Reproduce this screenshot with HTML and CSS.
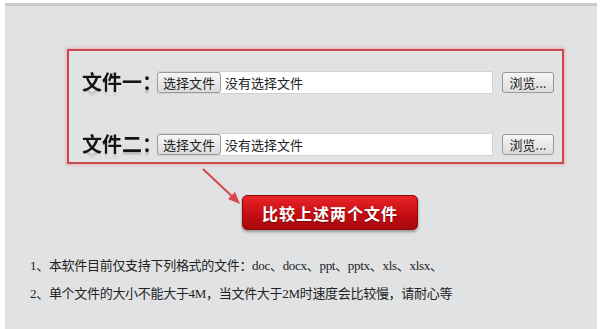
FILE: index.html
```html
<!DOCTYPE html>
<html lang="zh-CN">
<head>
    <meta charset="UTF-8">
    <title>文件比较</title>
    <link rel="stylesheet" href="styles.css">
</head>
<body>
    <div class="panel">
        <div class="upload-box">
            <div class="file-row">
                <span class="file-label">文件一：</span>
                <div class="file-field">
                    <span class="choose-btn">选择文件</span>
                    <span class="file-name">没有选择文件</span>
                </div>
                <span class="browse-btn">浏览...</span>
            </div>
            <div class="file-row">
                <span class="file-label">文件二：</span>
                <div class="file-field">
                    <span class="choose-btn">选择文件</span>
                    <span class="file-name">没有选择文件</span>
                </div>
                <span class="browse-btn">浏览...</span>
            </div>
        </div>

        <div class="action">
            <svg class="arrow" width="42" height="40" viewBox="0 0 42 40">
                <line x1="3" y1="3" x2="36" y2="34" stroke="#d8464a" stroke-width="2"/>
                <polygon points="40,38 28,33 35,26" fill="#d8464a"/>
            </svg>
            <button class="compare-btn">比较上述两个文件</button>
        </div>

        <div class="notes">
            <p>1、本软件目前仅支持下列格式的文件：doc、docx、ppt、pptx、xls、xlsx、</p>
            <p>2、单个文件的大小不能大于4M，当文件大于2M时速度会比较慢，请耐心等</p>
        </div>
    </div>
</body>
</html>
```

FILE: styles.css
```css
body {
    margin: 0;
    background-color: #ffffff;
    font-family: "Noto Sans CJK SC", sans-serif;
}

.panel {
    margin: 3px 3px 0 5px;
    height: 326px;
    background-color: #e1e2e4;
    border-top: 3px solid #c9cacc;
    box-sizing: border-box;
    padding-top: 43px;
    overflow: hidden;
}

.upload-box {
    margin-left: 62px;
    width: 497px;
    border: 2px solid #c9484c;
    box-shadow: 0 0 3px 1px rgba(232, 140, 140, 0.6);
    padding: 19px 8px 6px 13px;
    box-sizing: border-box;
}

.file-row {
    display: flex;
    align-items: center;
    height: 24px;
}

.file-row + .file-row {
    margin-top: 38px;
}

.file-label {
    width: 75px;
    flex-shrink: 0;
    white-space: nowrap;
    font-size: 20px;
    font-weight: bold;
    color: #151515;
    line-height: 24px;
    -webkit-box-reflect: below -8px linear-gradient(transparent 55%, rgba(255, 255, 255, 0.35));
}

.file-field {
    width: 336px;
    height: 23px;
    flex-shrink: 0;
    display: flex;
    align-items: center;
    background-color: #ffffff;
    border: 1px solid #d3d3d3;
    box-sizing: border-box;
}

.choose-btn,
.browse-btn {
    font-size: 13px;
    color: #222;
    line-height: 19px;
    padding: 0 5px;
    border: 1px solid #9a9a9a;
    border-radius: 3px;
    background: linear-gradient(#f6f6f6, #dcdcdc);
    white-space: nowrap;
}

.choose-btn {
    margin-left: -1px;
}

.file-name {
    margin-left: 4px;
    font-size: 13px;
    color: #222;
    white-space: nowrap;
}

.browse-btn {
    margin-left: 9px;
    width: 40px;
    text-align: center;
}

.action {
    display: flex;
    align-items: flex-start;
    margin-top: 2px;
    padding-left: 195px;
    height: 64px;
}

.compare-btn {
    margin-top: 29px;
    width: 176px;
    height: 35px;
    border: 1px solid #8c0a0c;
    border-radius: 5px;
    background: linear-gradient(#e8262a, #c50d12 55%, #a9080c);
    box-shadow: 0 2px 3px rgba(0, 0, 0, 0.35);
    color: #ffffff;
    font-family: "Noto Sans CJK SC", sans-serif;
    font-size: 16px;
    font-weight: bold;
    letter-spacing: 1px;
    text-shadow: 0 1px 1px rgba(0, 0, 0, 0.4);
    padding: 0;
}

.notes {
    margin-top: 22px;
    margin-left: 25px;
    white-space: nowrap;
}

.notes p {
    margin: 0;
    font-family: "Liberation Serif", "Noto Sans CJK SC", serif;
    font-size: 13px;
    line-height: 28px;
    letter-spacing: -0.3px;
    color: #222;
}
```
